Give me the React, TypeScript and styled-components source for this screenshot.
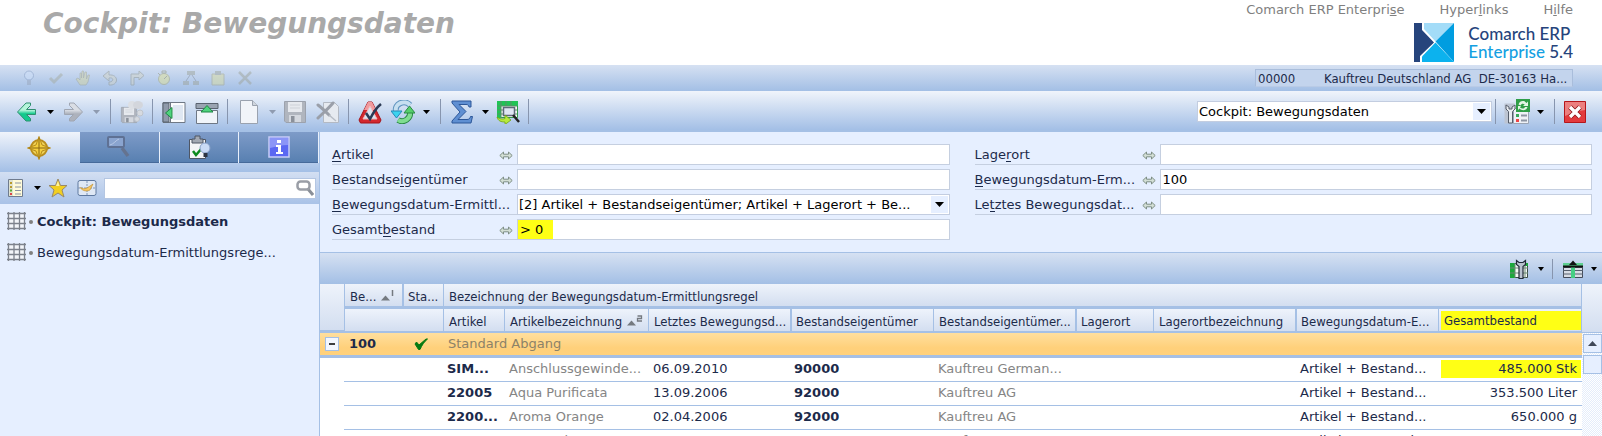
import React from "react";
import styled, { createGlobalStyle, css } from "styled-components";

const ui = `"DejaVu Sans", Verdana, sans-serif`;
const narrow = `"DejaVu Sans Condensed", Tahoma, sans-serif`;
const line = "#a5c0e5";
const ink = "#1c2a4a";
const barGradient = "linear-gradient(#f0f4fb, #a3bfe6)";
const midGradient = "linear-gradient(#d6e1f2, #a3bfe5)";

const GlobalStyle = createGlobalStyle`
  * { box-sizing: border-box; }
  body { margin: 0; background: #fff; font: 13px/16px ${ui}; color: ${ink}; }
  button, input, select { font: inherit; color: inherit; margin: 0; }
  button { border: 0; padding: 0; background: none; display: flex; align-items: center; justify-content: center; }
  svg { display: block; flex: none; }
`;

const Page = styled.div`
  min-width: 1100px;
  height: 100vh;
  display: flex;
  flex-direction: column;
  overflow: hidden;
`;

/* ---------- header ---------- */
const Header = styled.header`
  height: 65px;
  flex: none;
  display: flex;
  justify-content: space-between;
  padding: 0 29px 0 43px;
`;
const Title = styled.h1`
  margin: 7px 0 0;
  font: italic bold 28px/34px ${ui};
  color: #a9a9a9;
`;
const HeaderRight = styled.div`
  display: flex;
  flex-direction: column;
  align-items: flex-end;
`;
const TopNav = styled.nav`
  display: flex;
  gap: 35px;
  padding-top: 2px;
`;
const TopLink = styled.a`
  color: #808080;
  text-decoration: none;
`;
const Logo = styled.div`
  display: flex;
  gap: 14px;
  margin-top: 5px;
  font: 500 17px/18px Lato, sans-serif;
  color: #26447c;
`;
const LogoText = styled.div`
  padding-top: 2px;
`;
const LogoAccent = styled.span`
  color: #14a0e2;
`;

/* ---------- bars ---------- */
const StatusBar = styled.div`
  flex: none;
  height: 26px;
  display: flex;
  align-items: center;
  justify-content: space-between;
  padding: 0 29px 0 21px;
  background: ${midGradient};
`;
const StatusIcons = styled.div`
  display: flex;
  gap: 11px;
  opacity: 0.45;
`;
const Company = styled.div`
  display: flex;
  width: 318px;
  height: 18px;
  padding: 0 2px;
  font: 13px/17px ${narrow};
  background: #c3d4ed;
  border: 1px solid #a9bddb;
  border-bottom-color: #b9cbe6;
  white-space: pre;
`;
const CompanyCode = styled.span`
  width: 66px;
`;
const Toolbar = styled.div`
  flex: none;
  height: 41px;
  display: flex;
  align-items: center;
  padding: 2px 16px 0 15px;
  background: ${barGradient};
  border-bottom: 2px solid ${line};
`;
const IconButton = styled.button`
  width: 24px;
  height: 26px;
  & + & { margin-left: 9px; }
`;
const CaretButton = styled.button<{ $w?: number }>`
  width: ${(p) => p.$w ?? 22}px;
  height: 26px;
`;
const Separator = styled.span<{ $tight?: boolean }>`
  width: 1px;
  height: 25px;
  margin: 0 9px 0 ${(p) => (p.$tight ? 3 : 8)}px;
  background: #8795ae;
`;
const Spacer = styled.div`
  flex: 1;
`;
const ViewPicker = styled.div`
  position: relative;
  width: 295px;
`;
const Select = styled.select`
  appearance: none;
  display: block;
  width: 100%;
  height: 21px;
  padding: 0 22px 0 1px;
  border: 1px solid #c3cde0;
  border-radius: 0;
  background: #fff;
  color: #000;
  outline: none;
`;
const SelectArrow = styled.span`
  position: absolute;
  top: 2px;
  right: 2px;
  width: 17px;
  height: 17px;
  display: flex;
  align-items: center;
  justify-content: center;
  background: #e6efff;
  pointer-events: none;
`;

/* ---------- body ---------- */
const Body = styled.div`
  flex: 1;
  min-height: 0;
  display: flex;
`;
const Sidebar = styled.aside`
  flex: none;
  width: 320px;
  background: #e6efff;
  border-right: 1px solid ${line};
`;
const Tabs = styled.div`
  display: grid;
  grid-template-columns: repeat(4, 1fr);
  gap: 1px;
  height: 40px;
  align-items: start;
  padding-right: 1px;
  background: ${barGradient};
`;
const Tab = styled.button<{ $active?: boolean }>`
  height: 31px;
  ${(p) =>
    !p.$active &&
    css`
      background: linear-gradient(#7e9bc8, #5880b1);
      border-bottom: 1px solid #466a9a;
      box-shadow: 1px 0 #e9f0fb;
    `}
`;
const SideTools = styled.div`
  height: 32px;
  display: flex;
  align-items: center;
  padding: 0 3px 0 4px;
  background: linear-gradient(#d3dff2, #a9c2e7);
  ${IconButton} + ${IconButton} { margin-left: 5px; }
`;
const SideSearch = styled.div`
  position: relative;
  flex: 1;
  margin-left: 5px;
`;
const SearchInput = styled.input`
  width: 100%;
  height: 21px;
  display: block;
  border: 1px solid #b4c6e2;
  padding: 0 22px 0 3px;
  background: #fff;
`;
const SearchGo = styled.button`
  position: absolute;
  top: 0;
  right: 1px;
  width: 20px;
  height: 20px;
`;
const NavList = styled.ul`
  list-style: none;
  margin: 0;
  padding: 2px 0 0 7px;
`;
const NavItem = styled.li<{ $current?: boolean }>`
  height: 31px;
  display: flex;
  align-items: center;
  font-weight: ${(p) => (p.$current ? 700 : 400)};
`;
const Bullet = styled.span`
  width: 4px;
  height: 4px;
  border-radius: 2px;
  margin: 0 4px 0 3px;
  background: #808080;
`;
const NavLink = styled.a`
  color: ${ink};
  text-decoration: none;
`;
const Main = styled.main`
  flex: 1;
  min-width: 0;
  display: flex;
  flex-direction: column;
`;

/* ---------- search form ---------- */
const Form = styled.form`
  flex: none;
  display: grid;
  grid-template-columns: 1fr 1fr;
  gap: 25px;
  padding: 12px 10px 12px 12px;
  background: #e6efff;
  border-bottom: 1px solid ${line};
`;
const FieldColumn = styled.div`
  display: flex;
  flex-direction: column;
  gap: 4px;
  min-width: 0;
`;
const Field = styled.div`
  display: flex;
  height: 21px;
`;
const FieldHead = styled.div`
  width: 185px;
  flex: none;
  display: flex;
  justify-content: space-between;
  align-items: center;
  padding: 2px 4px 0 0;
  border-bottom: 1px solid #c5cfe0;
  white-space: nowrap;
`;
const Key = styled.span`
  border-bottom: 1px solid ${ink};
  display: inline-block;
  line-height: 13px;
`;
const FieldInput = styled.input<{ $marked?: boolean }>`
  flex: 1;
  min-width: 0;
  border: 1px solid #c5cfe0;
  padding: 1px 2px 0;
  color: #000;
  background: ${(p) =>
    p.$marked ? "linear-gradient(#ffff15, #ffff15) 0 0 / 35px 100% no-repeat #fff" : "#fff"};
`;
const FieldSelect = styled.div`
  position: relative;
  flex: 1;
  min-width: 0;
`;

/* ---------- table ---------- */
const GridTools = styled.div`
  flex: none;
  height: 31px;
  display: flex;
  align-items: center;
  justify-content: flex-end;
  background: ${midGradient};
`;
const GridSeparator = styled.span`
  width: 1px;
  height: 20px;
  margin: 0 8px 0 1px;
  background: #8795ae;
`;
const GridArea = styled.div`
  flex: 1;
  min-height: 0;
  overflow: hidden;
  display: flex;
`;
const Table = styled.table`
  flex: 1;
  width: 0;
  table-layout: fixed;
  border-collapse: separate;
  border-spacing: 0;
  align-self: flex-start;
`;
const Col = styled.col<{ $w?: number }>`
  width: ${(p) => (p.$w ? `${p.$w}px` : "auto")};
`;
const Th = styled.th<{ $thick?: boolean; $open?: boolean; $end?: boolean; $marked?: boolean }>`
  height: 25px;
  padding: ${(p) => (p.$marked ? 0 : 4)}px 0 0 ${(p) => (p.$thick ? 4 : 5)}px;
  text-align: left;
  vertical-align: middle;
  white-space: nowrap;
  overflow: hidden;
  font: 13px/18px ${narrow};
  background: linear-gradient(#eef3fb, #d3def0);
  border-left: ${(p) => (p.$open ? 0 : p.$thick ? 2 : 1)}px solid ${line};
  border-bottom: 3px solid ${line};
  ${(p) => p.$end && `border-right: 1px solid ${line};`}
  thead tr + tr & {
    height: 24px;
    border-bottom-width: 2px;
  }
`;
const HeadMark = styled.span`
  display: block;
  height: 19px;
  margin: 2px 0 1px -3px;
  padding-left: 3px;
  line-height: 20px;
  background: #ffff15;
`;
const SortMark = styled.span`
  display: inline-flex;
  margin-left: 5px;
`;
const GroupRow = styled.tr`
  background: linear-gradient(#ffdf9e, #ffd07a 60%, #ffd27e);
`;
const GroupCell = styled.td<{ $strong?: boolean }>`
  height: 25px;
  padding: 0 4px 0 5px;
  border-bottom: 3px solid ${line};
  color: ${(p) => (p.$strong ? ink : "#8c8268")};
  font-weight: ${(p) => (p.$strong ? 700 : 400)};
`;
const Toggle = styled.button`
  width: 14px;
  height: 14px;
  border: 1px solid ${line};
  background: #f3f7ff;
`;
const Centered = styled.span`
  display: flex;
  justify-content: center;
  padding-right: 4px;
`;
type Tone = "bold" | "muted" | "number";
const Td = styled.td<{ $tone?: Tone; $bare?: boolean }>`
  height: 24px;
  padding: 0 5px 1px ${(p) => (p.$tone === "bold" ? 4 : 5)}px;
  line-height: 18px;
  white-space: nowrap;
  overflow: hidden;
  text-overflow: clip;
  background: #fff;
  border-bottom: 1px solid ${(p) => (p.$bare ? "#fff" : line)};
  ${(p) => p.$tone === "bold" && "font-weight: 700; padding-right: 0;"}
  ${(p) => p.$tone === "muted" && "color: #858585; padding-right: 0;"}
  ${(p) => p.$tone === "number" && "text-align: right;"}
`;
const CellMark = styled.span`
  display: block;
  margin: 0 -4px 0 -2px;
  padding-right: 4px;
  background: #ffff15;
`;
const ScrollColumn = styled.div`
  flex: none;
  width: 20px;
  display: flex;
  flex-direction: column;
  background: repeating-conic-gradient(#e4edfb 0 25%, #fff 0 50%) 0 0 / 2px 2px;
`;
const ScrollCap = styled.div`
  height: 49px;
  flex: none;
  background: linear-gradient(#eef3fb, #d3def0);
  border-bottom: 1px solid ${line};
`;
const ScrollButton = styled.button`
  flex: none;
  height: 19px;
  margin: 1px 0 0 1px;
  background: #e6efff;
  border: 1px solid ${line};
  & + & { margin-top: 2px; }
`;

/* ---------- icons ---------- */
const Svg = ({ w = 24, h = w, b = w, children }: { w?: number; h?: number; b?: number; children: React.ReactNode }) => (
  <svg width={w} height={h} viewBox={`0 0 ${b} ${(b * h) / w}`} aria-hidden="true">
    {children}
  </svg>
);
const Caret = ({ color = "#000", w = 7 }: { color?: string; w?: number }) => (
  <svg width={w} height={w > 7 ? 5 : 4} viewBox="0 0 7 4" preserveAspectRatio="none" aria-hidden="true">
    <path d="M0 0h7L3.500 4z" fill={color} />
  </svg>
);
const ArrowIcon = ({ back }: { back?: boolean }) => (
  <Svg>
    <defs>
      <linearGradient id={back ? "ga" : "gb"} x2="0" y2="1">
        <stop offset="0.4" stopColor={back ? "#b5f5da" : "#d9dde4"} />
        <stop offset="0.6" stopColor={back ? "#12c98c" : "#adb2bc"} />
      </linearGradient>
    </defs>
    <path
      d={back ? "M2.500 12 11 3h4.500v2.500L11.500 9.500h9v5h-9l4 4V21H11z" : "M21.500 12 13 3H8.500v2.500l4 4h-9v5h9l-4 4V21H13z"}
      fill={back ? "url(#ga)" : "url(#gb)"}
      stroke={back ? "#2f8f70" : "#a0a6b2"}
      strokeLinejoin="round"
    />
  </Svg>
);
const Floppy = ({ x = 1, y = 1, s = 22 }: { x?: number; y?: number; s?: number }) => (
  <g transform={`translate(${x} ${y}) scale(${s / 22})`}>
    <path d="M.5.5h21v21H2L.5 20z" fill="#b0b5be" stroke="#9ca2ad" />
    <path d="M4 1h14v10H4z" fill="#e6e9ee" />
    <path d="M6 4h10M6 7h10" stroke="#cdd1d8" />
    <path d="M5 14h12v7H5z" fill="#d4d8df" />
    <path d="M7 15h3.500v6H7z" fill="#8b919b" />
  </g>
);
const SaveSpecialIcon = () => (
  <Svg>
    <Floppy x={1} y={7} s={16} />
    <circle cx="12" cy="5" r="4" fill="#dcdfe4" />
    <ellipse cx="18" cy="5" rx="5" ry="4" fill="#d3d6dc" />
    <circle cx="20" cy="13" r="3" fill="#d6dae0" stroke="#bfc4cc" />
    <circle cx="17" cy="19" r="2.500" fill="#d6dae0" stroke="#bfc4cc" />
  </Svg>
);
const PanelLeftIcon = () => (
  <Svg>
    <path d="M1 2.500h22v20H1z" fill="#fbfcfe" stroke="#6f7885" />
    <path d="M1 3h6v19H1z" fill="#8f9aaa" stroke="#59626f" />
    <path d="M8.500 3v19" stroke="#6f7885" />
    <path d="M11 5h10v15H11z" fill="#dfe7f2" />
    <path d="M3.500 13 10 7.500v11z" fill="#4fd37d" stroke="#1f8844" />
  </Svg>
);
const PanelTopIcon = () => (
  <Svg>
    <path d="M1 3.500h22v5H1z" fill="#9aa4b2" stroke="#59626f" />
    <path d="M1.500 10.500h21v13h-21z" fill="#f1f5fa" stroke="#6f7885" />
    <path d="M12 5.500 18 12H6z" fill="#4fd37d" stroke="#1f8844" />
  </Svg>
);
const PageIcon = () => (
  <Svg>
    <path d="M3.500.5h12l5 5v18h-17z" fill="#f1f4f9" stroke="#9aa2af" />
    <path d="M15.500.5v5h5" fill="#cfd5de" stroke="#9aa2af" />
  </Svg>
);
const DeletePageIcon = () => (
  <Svg>
    <path d="M7.500 2.500h11l4 4v16h-15z" fill="#e6eaf0" stroke="#b3b9c3" />
    <path d="M2 5c4 3 8 7 11 10M17 3C12 9 6 14 2 18" fill="none" stroke="#9a9fa9" strokeWidth="3" strokeLinecap="round" />
    <path d="m13 15 7 6" stroke="#b7bcc5" strokeWidth="1.500" />
  </Svg>
);
const WarnIcon = () => (
  <Svg>
    <path d="M10 2h4l9 18-1.500 3h-19L1 20z" fill="#d3282e" stroke="#a51319" strokeLinejoin="round" />
    <path d="M10 2h4l4 8H6z" fill="#f09a9d" />
    <path d="m12 6 7 13H5z" fill="#dbe4f1" stroke="#f5b7b9" />
    <path d="m8 13 4 6C15 13 18 8 23 4" fill="none" stroke="#2b3a55" strokeWidth="2.600" />
  </Svg>
);
const RefreshIcon = () => (
  <Svg>
    <path d="M5 11a8 7 0 0 1 14-6" fill="none" stroke="#5f94bf" strokeWidth="6" />
    <path d="M5 11a8 7 0 0 1 14-6" fill="none" stroke="#c6dff0" strokeWidth="4" />
    <path d="M0 11h11l-5.500 7z" fill="#3bd3ee" stroke="#2589b8" />
    <path d="M19 12a8 8 0 0 1-12 8" fill="none" stroke="#2b8a45" strokeWidth="6" />
    <path d="M19 12a8 8 0 0 1-12 8" fill="none" stroke="#7fdd90" strokeWidth="4" />
    <path d="M13 13h11l-5.500-7z" fill="#56cf6c" stroke="#2b8a45" />
  </Svg>
);
const SigmaIcon = () => (
  <Svg>
    <path
      d="M2 1h19v6h-2c-.5-2-1-2.500-3-2.500H9l7 7-8 8h9c2 0 3-1 3.500-3h2L21 23H2v-2l8-9L2 3z"
      fill="#5f8fd2"
      stroke="#2d5799"
    />
  </Svg>
);
const TableSearchIcon = () => (
  <Svg>
    <path d="M1.500 1.500h20v16h-20z" fill="#f4faf4" stroke="#2f9a48" />
    <path d="M1 1h21v5H1zM1 6h4v12H1z" fill="#1fc455" />
    <path d="M1 6h20M1 10h20M1 14h20M5 1v17M10 1v5M15 1v5" stroke="#5a8f69" fill="none" />
    <path d="M7.500 7.500h11v8h-11z" fill="#dfe6f3" stroke="#5f687a" strokeWidth="1.500" />
    <path d="m17 15 6 7" stroke="#222" strokeWidth="2.500" />
    <path d="M1 17c2 2 6 2.500 8 1.500V15l6 5-6 4.500V22c-4 0-7-1-8-5z" fill="#b8ea3c" stroke="#6ea314" strokeWidth=".8" />
  </Svg>
);
const ConfigIcon = () => (
  <Svg w={26}>
    <path d="M.5 4.500h10v20H.5z" fill="#bcc4d2" />
    <path d="M9.500 9.500h15v15h-15z" fill="#eef1f6" stroke="#9aa4b3" />
    <path d="M2 6v4l2.500 2.500V24h4V12.500L11 10V6L8 8v2H5V8z" fill="#e8ebf0" stroke="#555d6a" />
    <path d="M12 15h3v3h-3z" fill="#39a85a" />
    <path d="M12 20h3v3h-3z" fill="#e44" />
    <path d="M17 16.500h6M17 21.500h6" stroke="#8d95a3" strokeWidth="2" />
    <path d="M12 0h14v13H12z" fill="#2f9e47" />
    <path d="M14.500 5.500c1-4 6-4.500 8-1.500l1.500-1.500V7h-5l1.700-1.500c-1.500-1.500-3.500-1-4 1zM23.500 8c-1 4-6 4-8 1.500L14 11V7h3l-1 1.500c2 1.500 4 1.500 5-.5z" fill="#e3f5e5" />
  </Svg>
);
const CloseIcon = () => (
  <Svg w={22}>
    <path d="M.5.5h21v21H.5z" fill="#e33a3d" stroke="#b5161b" />
    <path d="M1 1h20v8C14 10 7 12 1 15z" fill="#ec7f7f" />
    <path d="m6 6 10 10M16 6 6 16" stroke="#8e1418" strokeWidth="5" />
    <path d="m6 6 10 10M16 6 6 16" stroke="#fff" strokeWidth="3.400" />
  </Svg>
);
const CompassIcon = () => (
  <Svg>
    <circle cx="12" cy="12" r="8" fill="#ecd057" stroke="#b98d1c" strokeWidth="2" />
    <path d="m12 .5 3 8.500 8.500 3-8.500 3-3 8.500-3-8.500L.5 12 9 9z" fill="#f4cf3d" stroke="#b98d1c" />
    <path d="M12 2v20M2 12h20" stroke="#8a6712" />
  </Svg>
);
const LensIcon = () => (
  <Svg>
    <path d="m15 13 6 8" stroke="#65738f" strokeWidth="3.500" />
    <rect x="1" y="2" width="16" height="10" rx="1" fill="#8aa4cf" stroke="#5f7194" strokeWidth="2" />
    <path d="M3 10c4-1 6-5 9-6" stroke="#b7c8e6" fill="none" />
  </Svg>
);
const TaskIcon = () => (
  <Svg>
    <path d="M2.500 4.500h16v19h-16z" fill="#f4f5f7" stroke="#4e5665" />
    <path d="M8 1h5v3h3v4H5V4h3z" fill="#a3a9b3" stroke="#4e5665" />
    <path d="m6 16 3 4 6-7" fill="none" stroke="#0b8a1e" strokeWidth="2.500" />
    <circle cx="18" cy="13" r="5" fill="#c9daf5" stroke="#8aa1c8" />
    <path d="M16.500 18h4v4h-4z" fill="#2d3442" />
  </Svg>
);
const InfoIcon = () => (
  <Svg w={22}>
    <path d="M1 1h20v20H1z" fill="#5b68f2" stroke="#c8cdf7" strokeWidth="1.500" />
    <path d="M2 2h18v7C13 9 8 11 2 12z" fill="#8b95f7" />
    <path d="M9 4h4v3H9zM8 9h5v7h2v2H8v-2h2v-5H8z" fill="#fff" />
  </Svg>
);
const ListIcon = () => (
  <Svg w={18} h={20}>
    <path d="M1.500 1.500h14v17h-14z" fill="#fffbd8" stroke="#6f7b8e" />
    <path d="M2 2h4v16H2z" fill="#dfe2cf" />
    <path d="M3 5h2M3 9h2" stroke="#b99a2b" strokeWidth="2" />
    <path d="M3 12.500h2" stroke="#58a834" strokeWidth="2" />
    <path d="M3 16h2" stroke="#d44" strokeWidth="2" />
    <path d="M8 5h6M8 9h6M8 12.500h6M8 16h6" stroke="#8c95a4" />
  </Svg>
);
const StarIcon = () => (
  <Svg w={20}>
    <path d="m10 1 2.500 6.500H19l-5 4.500 2 7-6-4-6 4 2-7-5-4.500h6.500z" fill="#f2cf20" stroke="#98896a" />
    <path d="m10 3 1.500 5H8z" fill="#fff2a0" />
  </Svg>
);
const PictureIcon = () => (
  <Svg w={20} h={18}>
    <rect x="1" y="1.500" width="18" height="15" rx="2" fill="#dfe8f5" stroke="#5e789f" />
    <path d="M1 9h18M10 2v14" stroke="#7f95b7" strokeDasharray="2 1" />
    <path d="M3 8.500c3 1 4 2 7 .5l6-4-3 6c-3 1.500-7 1.500-10-2.500z" fill="#f5c766" stroke="#c18b24" strokeWidth=".6" />
  </Svg>
);
const SearchGlyph = () => (
  <Svg w={18}>
    <path d="m12 10 5 6" stroke="#8a8f98" strokeWidth="3" />
    <rect x="1.500" y="2.500" width="12" height="8" rx="3" fill="#fff" stroke="#9a9ea6" strokeWidth="2.500" />
  </Svg>
);
const GridIcon = () => (
  <Svg w={19}>
    <path d="M1 1h17v15H1z" fill="#f3f5f9" />
    <path d="M0 1.500h19M0 6.500h19M0 11.500h19M0 16.500h19M1.500 0v18M7 0v18M12.500 0v18M17.500 0v18" stroke="#7d828c" strokeWidth="1.300" fill="none" />
  </Svg>
);
const SwapIcon = () => (
  <Svg w={14} h={9}>
    <path d="M.8 4.500 4.500 1v2.200h5V1l3.700 3.500L9.500 8V5.800h-5V8z" fill="#d3dfd5" stroke="#7f8f86" />
  </Svg>
);
const TableToolIcon = () => (
  <Svg w={20}>
    <path d="M1.500 4.500h17v14h-17z" fill="#f6f9f6" stroke="#3a4a44" />
    <path d="M1 4h5v15H1zM13 4h6v3h-6z" fill="#1ca83c" />
    <path d="M1 9h18M1 14h18M6 4v15M16 4v15" stroke="#6c8a75" fill="none" />
    <path d="M7.500 1.500v4L10 7.500v12h4v-12l2.500-2v-4L14 3.500h-4z" fill="#b9c2cf" stroke="#222a38" strokeWidth="1.200" />
  </Svg>
);
const TableUpIcon = () => (
  <Svg w={20}>
    <path d="M0 4h20v4H0z" fill="#5ecf90" />
    <path d="M.5 8.500h19v10H.5z" fill="#d8dde5" stroke="#444c5a" />
    <path d="M0 11.500h20M0 15h20" stroke="#56606f" fill="none" />
    <path d="M8 8h4v11H8z" fill="#46cf84" />
    <path d="M0 7.500h20" stroke="#111" strokeWidth="2" />
    <path d="M10 1.500 14 6H6z" fill="#111" />
  </Svg>
);
const UpMark = () => (
  <svg width="9" height="5" viewBox="0 0 9 5" aria-hidden="true">
    <path d="M4.500 0 9 5H0z" fill="#404858" />
  </svg>
);
const SortIcon = ({ n }: { n: 1 | 2 }) => (
  <Svg w={17} h={11}>
    <path d="M4.500 5.500 9 10.500H0z" fill="#757a80" />
    {n === 1 ? (
      <path d="M11.500 0v6" stroke="#757a80" strokeWidth="1.500" />
    ) : (
      <path d="M10.500 1h4v2.500h-4V6H15" fill="none" stroke="#757a80" strokeWidth="1.300" />
    )}
  </Svg>
);
const LogoMark = () => (
  <svg width="40" height="39" viewBox="0 0 40 39" aria-hidden="true">
    <path d="M0 0h8v7l12 12.500L6 33v6H0z" fill="#26447c" />
    <path d="M10 0h30L21.500 18.500 10 6z" fill="#a3dcf8" />
    <path d="M40 0v39L21.500 18.500z" fill="#009de0" />
    <path d="M21.500 19.500 40 39H8v-5.500z" fill="#0cb2ee" />
  </svg>
);
const statusShapes: { name: string; shape: React.ReactNode }[] = [
  { name: "Hinweis", shape: <><circle cx="8" cy="5.500" r="4.500" fill="#cfe1fb" stroke="#7b93bb" /><path d="M6 10h4v5H6z" fill="#96a3b8" /></> },
  { name: "Prüfen", shape: <path d="m2 8 4 4 8-8" fill="none" stroke="#a3a89a" strokeWidth="3" /> },
  { name: "Anhalten", shape: <path d="M5 15 1 9l2-1 2 2V3h1.500v5L7 1h1.500v7L10 2h1.500v7L13 5h1.500L13 12l-2 3z" fill="#d8d79c" stroke="#97967a" strokeWidth=".7" /> },
  { name: "Rückgängig", shape: <path d="M7 1 1 6l6 5V8c5-1 5 4 0 4v3c10 1 10-11 0-10z" fill="#d5d5c4" stroke="#8e9389" /> },
  { name: "Wiederholen", shape: <path d="m10 1 5 4.500L10 10V7.500H5V15H2V4h8z" fill="#d5d5c4" stroke="#8e9389" /> },
  { name: "Termin", shape: <><circle cx="8" cy="9" r="5.500" fill="#e6e58e" stroke="#a3a26c" /><path d="M6 1h4v2H6zM8 9l3-3M2 3l2 2" stroke="#8a8a66" fill="none" /></> },
  { name: "Struktur", shape: <><path d="M4 1h8v4H4zM0 11h6v4H0zM10 11h6v4h-6z" fill="#9aa094" /><path d="m7 5-4 6M9 5l4 6" stroke="#7d8690" /></> },
  { name: "Zwischenablage", shape: <><path d="M2 4h12v11H2z" fill="#dede98" stroke="#a3a27a" /><path d="M5 1h6v4H5z" fill="#9aa094" /></> },
  { name: "Abbrechen", shape: <path d="m2 2 12 12M14 2 2 14" stroke="#9ba093" strokeWidth="2.500" /> },
];

/* ---------- data ---------- */
const columnWidths = [24, 58, 41, 61, 144, 142, 143, 142, 78, 142, 143];
const rows = [
  ["SIM...", "Anschlussgewinde...", "06.09.2010", "90000", "Kauftreu German...", "485.000 Stk"],
  ["22005", "Aqua Purificata", "13.09.2006", "92000", "Kauftreu AG", "353.500 Liter"],
  ["2200...", "Aroma Orange", "02.04.2006", "92000", "Kauftreu AG", "650.000 g"],
  ["2200...", "Aroma Zitrone", "02.04.2006", "92000", "Kauftreu AG", "650.000 g"],
];

type FieldSpec = { id: string; pre: string; key: string; post: string; value?: string; marked?: boolean; list?: boolean };
const leftFields: FieldSpec[] = [
  { id: "artikel", pre: "", key: "A", post: "rtikel" },
  { id: "eigner", pre: "Bestandse", key: "i", post: "gentümer" },
  { id: "regeltyp", pre: "", key: "B", post: "ewegungsdatum-Ermittl...", list: true, value: "[2] Artikel + Bestandseigentümer; Artikel + Lagerort + Be..." },
  { id: "bestand", pre: "Gesamt", key: "b", post: "estand", value: "> 0", marked: true },
];
const rightFields: FieldSpec[] = [
  { id: "lagerort", pre: "Lage", key: "r", post: "ort" },
  { id: "regel", pre: "", key: "B", post: "ewegungsdatum-Erm...", value: "100" },
  { id: "datum", pre: "Le", key: "t", post: "ztes Bewegungsdat..." },
];

const FieldRow = ({ f }: { f: FieldSpec }) => (
  <Field>
    <FieldHead>
      <label htmlFor={f.id}>
        {f.pre}
        <Key>{f.key}</Key>
        {f.post}
      </label>
      {!f.list && <SwapIcon />}
    </FieldHead>
    {f.list ? (
      <FieldSelect>
        <Select id={f.id}>
          <option>{f.value}</option>
        </Select>
        <SelectArrow>
          <Caret w={9} />
        </SelectArrow>
      </FieldSelect>
    ) : (
      <FieldInput id={f.id} defaultValue={f.value} $marked={f.marked} />
    )}
  </Field>
);

const Split = ({ label, muted, children }: { label: string; muted?: boolean; children: React.ReactNode }) => (
  <>
    <IconButton aria-label={label}>{children}</IconButton>
    <CaretButton aria-label={`${label}: Auswahl`}>
      <Caret color={muted ? "#8f9bb0" : "#000"} />
    </CaretButton>
  </>
);

export default function App() {
  return (
    <Page>
      <GlobalStyle />
      <Header>
        <Title>Cockpit: Bewegungsdaten</Title>
        <HeaderRight>
          <TopNav>
            <TopLink href="#erp">Comarch ERP Enterpri<u>s</u>e</TopLink>
            <TopLink href="#links">Hyper<u>l</u>inks</TopLink>
            <TopLink href="#hilfe">H<u>i</u>lfe</TopLink>
          </TopNav>
          <Logo>
            <LogoMark />
            <LogoText>
              Comarch ERP
              <br />
              <LogoAccent>Enterprise</LogoAccent> 5.4
            </LogoText>
          </Logo>
        </HeaderRight>
      </Header>

      <StatusBar>
        <StatusIcons>
          {statusShapes.map((s) => (
            <button key={s.name} aria-label={s.name} disabled>
              <Svg w={16}>{s.shape}</Svg>
            </button>
          ))}
        </StatusIcons>
        <Company>
          <CompanyCode>00000</CompanyCode>
          <span>{"Kauftreu Deutschland AG  DE-30163 Ha..."}</span>
        </Company>
      </StatusBar>

      <Toolbar>
        <Split label="Zurück"><ArrowIcon back /></Split>
        <Split label="Vorwärts" muted><ArrowIcon /></Split>
        <Separator $tight />
        <IconButton aria-label="Arbeitsbereich speichern"><SaveSpecialIcon /></IconButton>
        <Separator />
        <IconButton aria-label="Navigation ausblenden"><PanelLeftIcon /></IconButton>
        <IconButton aria-label="Kopfbereich ausblenden"><PanelTopIcon /></IconButton>
        <Separator />
        <Split label="Neu" muted><PageIcon /></Split>
        <IconButton aria-label="Speichern"><Svg><Floppy /></Svg></IconButton>
        <IconButton aria-label="Löschen"><DeletePageIcon /></IconButton>
        <Separator />
        <IconButton aria-label="Prüfen"><WarnIcon /></IconButton>
        <IconButton aria-label="Aktualisieren"><RefreshIcon /></IconButton>
        <CaretButton aria-label="Aktualisieren: Auswahl"><Caret /></CaretButton>
        <Separator $tight />
        <Split label="Summe"><SigmaIcon /></Split>
        <IconButton aria-label="In Tabelle suchen"><TableSearchIcon /></IconButton>
        <Separator />
        <Spacer />
        <ViewPicker>
          <Select aria-label="Ansicht">
            <option>Cockpit: Bewegungsdaten</option>
          </Select>
          <SelectArrow>
            <Caret w={9} />
          </SelectArrow>
        </ViewPicker>
        <Separator $tight />
        <Split label="Einstellungen"><ConfigIcon /></Split>
        <Separator $tight />
        <button aria-label="Schließen"><CloseIcon /></button>
      </Toolbar>

      <Body>
        <Sidebar>
          <Tabs>
            <Tab $active aria-label="Navigation"><CompassIcon /></Tab>
            <Tab aria-label="Suche"><LensIcon /></Tab>
            <Tab aria-label="Aufgaben"><TaskIcon /></Tab>
            <Tab aria-label="Info"><InfoIcon /></Tab>
          </Tabs>
          <SideTools>
            <IconButton aria-label="Liste"><ListIcon /></IconButton>
            <CaretButton $w={18} aria-label="Liste: Auswahl"><Caret /></CaretButton>
            <IconButton aria-label="Favoriten"><StarIcon /></IconButton>
            <IconButton aria-label="Ansicht"><PictureIcon /></IconButton>
            <SideSearch>
              <SearchInput aria-label="Navigation durchsuchen" />
              <SearchGo aria-label="Suchen"><SearchGlyph /></SearchGo>
            </SideSearch>
          </SideTools>
          <NavList>
            <NavItem $current>
              <GridIcon />
              <Bullet />
              <NavLink href="#cockpit">Cockpit: Bewegungsdaten</NavLink>
            </NavItem>
            <NavItem>
              <GridIcon />
              <Bullet />
              <NavLink href="#regeln">Bewegungsdatum-Ermittlungsrege...</NavLink>
            </NavItem>
          </NavList>
        </Sidebar>

        <Main>
          <Form>
            <FieldColumn>{leftFields.map((f) => <FieldRow key={f.id} f={f} />)}</FieldColumn>
            <FieldColumn>{rightFields.map((f) => <FieldRow key={f.id} f={f} />)}</FieldColumn>
          </Form>
          <GridTools>
            <IconButton aria-label="Spalten"><TableToolIcon /></IconButton>
            <CaretButton $w={20} aria-label="Spalten: Auswahl"><Caret w={6} /></CaretButton>
            <GridSeparator />
            <IconButton aria-label="Gruppen"><TableUpIcon /></IconButton>
            <CaretButton $w={17} aria-label="Gruppen: Auswahl"><Caret w={6} /></CaretButton>
          </GridTools>
          <GridArea>
            <Table>
              <colgroup>
                {columnWidths.map((w, i) => <Col key={i} $w={w} />)}
                <Col />
              </colgroup>
              <thead>
                <tr>
                  <Th rowSpan={2} $open />
                  <Th>Be...<SortMark><SortIcon n={1} /></SortMark></Th>
                  <Th $thick>Sta...</Th>
                  <Th colSpan={9} $end>Bezeichnung der Bewegungsdatum-Ermittlungsregel</Th>
                </tr>
                <tr>
                  <Th colSpan={2} />
                  <Th>Artikel</Th>
                  <Th>Artikelbezeichnung<SortMark><SortIcon n={2} /></SortMark></Th>
                  <Th>Letztes Bewegungsd...</Th>
                  <Th $thick>Bestandseigentümer</Th>
                  <Th>Bestandseigentümer...</Th>
                  <Th $thick>Lagerort</Th>
                  <Th>Lagerortbezeichnung</Th>
                  <Th $thick>Bewegungsdatum-E...</Th>
                  <Th $end $marked><HeadMark>Gesamtbestand</HeadMark></Th>
                </tr>
              </thead>
              <tbody>
                <GroupRow>
                  <GroupCell><Toggle aria-label="Gruppe zuklappen"><Svg w={8}><path d="M1 4h6" stroke="#000" strokeWidth="1.500" /></Svg></Toggle></GroupCell>
                  <GroupCell $strong>100</GroupCell>
                  <GroupCell>
                    <Centered>
                      <Svg w={14}><path d="m1 7 1.500-2L5 8l7-6h1.500C10 5 8 8 6 12.500H4.500z" fill="#067a12" stroke="#067a12" /></Svg>
                    </Centered>
                  </GroupCell>
                  <GroupCell colSpan={9}>Standard Abgang</GroupCell>
                </GroupRow>
                {rows.map((r, i) => (
                  <tr key={i}>
                    <Td $bare />
                    <Td colSpan={2} />
                    <Td $tone="bold">{r[0]}</Td>
                    <Td $tone="muted">{r[1]}</Td>
                    <Td>{r[2]}</Td>
                    <Td $tone="bold">{r[3]}</Td>
                    <Td $tone="muted">{r[4]}</Td>
                    <Td />
                    <Td />
                    <Td>Artikel + Bestand...</Td>
                    <Td $tone="number">{i === 0 ? <CellMark>{r[5]}</CellMark> : r[5]}</Td>
                  </tr>
                ))}
              </tbody>
            </Table>
            <ScrollColumn>
              <ScrollCap />
              <ScrollButton aria-label="Nach oben"><UpMark /></ScrollButton>
              <ScrollButton aria-label="Bildlauf" />
            </ScrollColumn>
          </GridArea>
        </Main>
      </Body>
    </Page>
  );
}
